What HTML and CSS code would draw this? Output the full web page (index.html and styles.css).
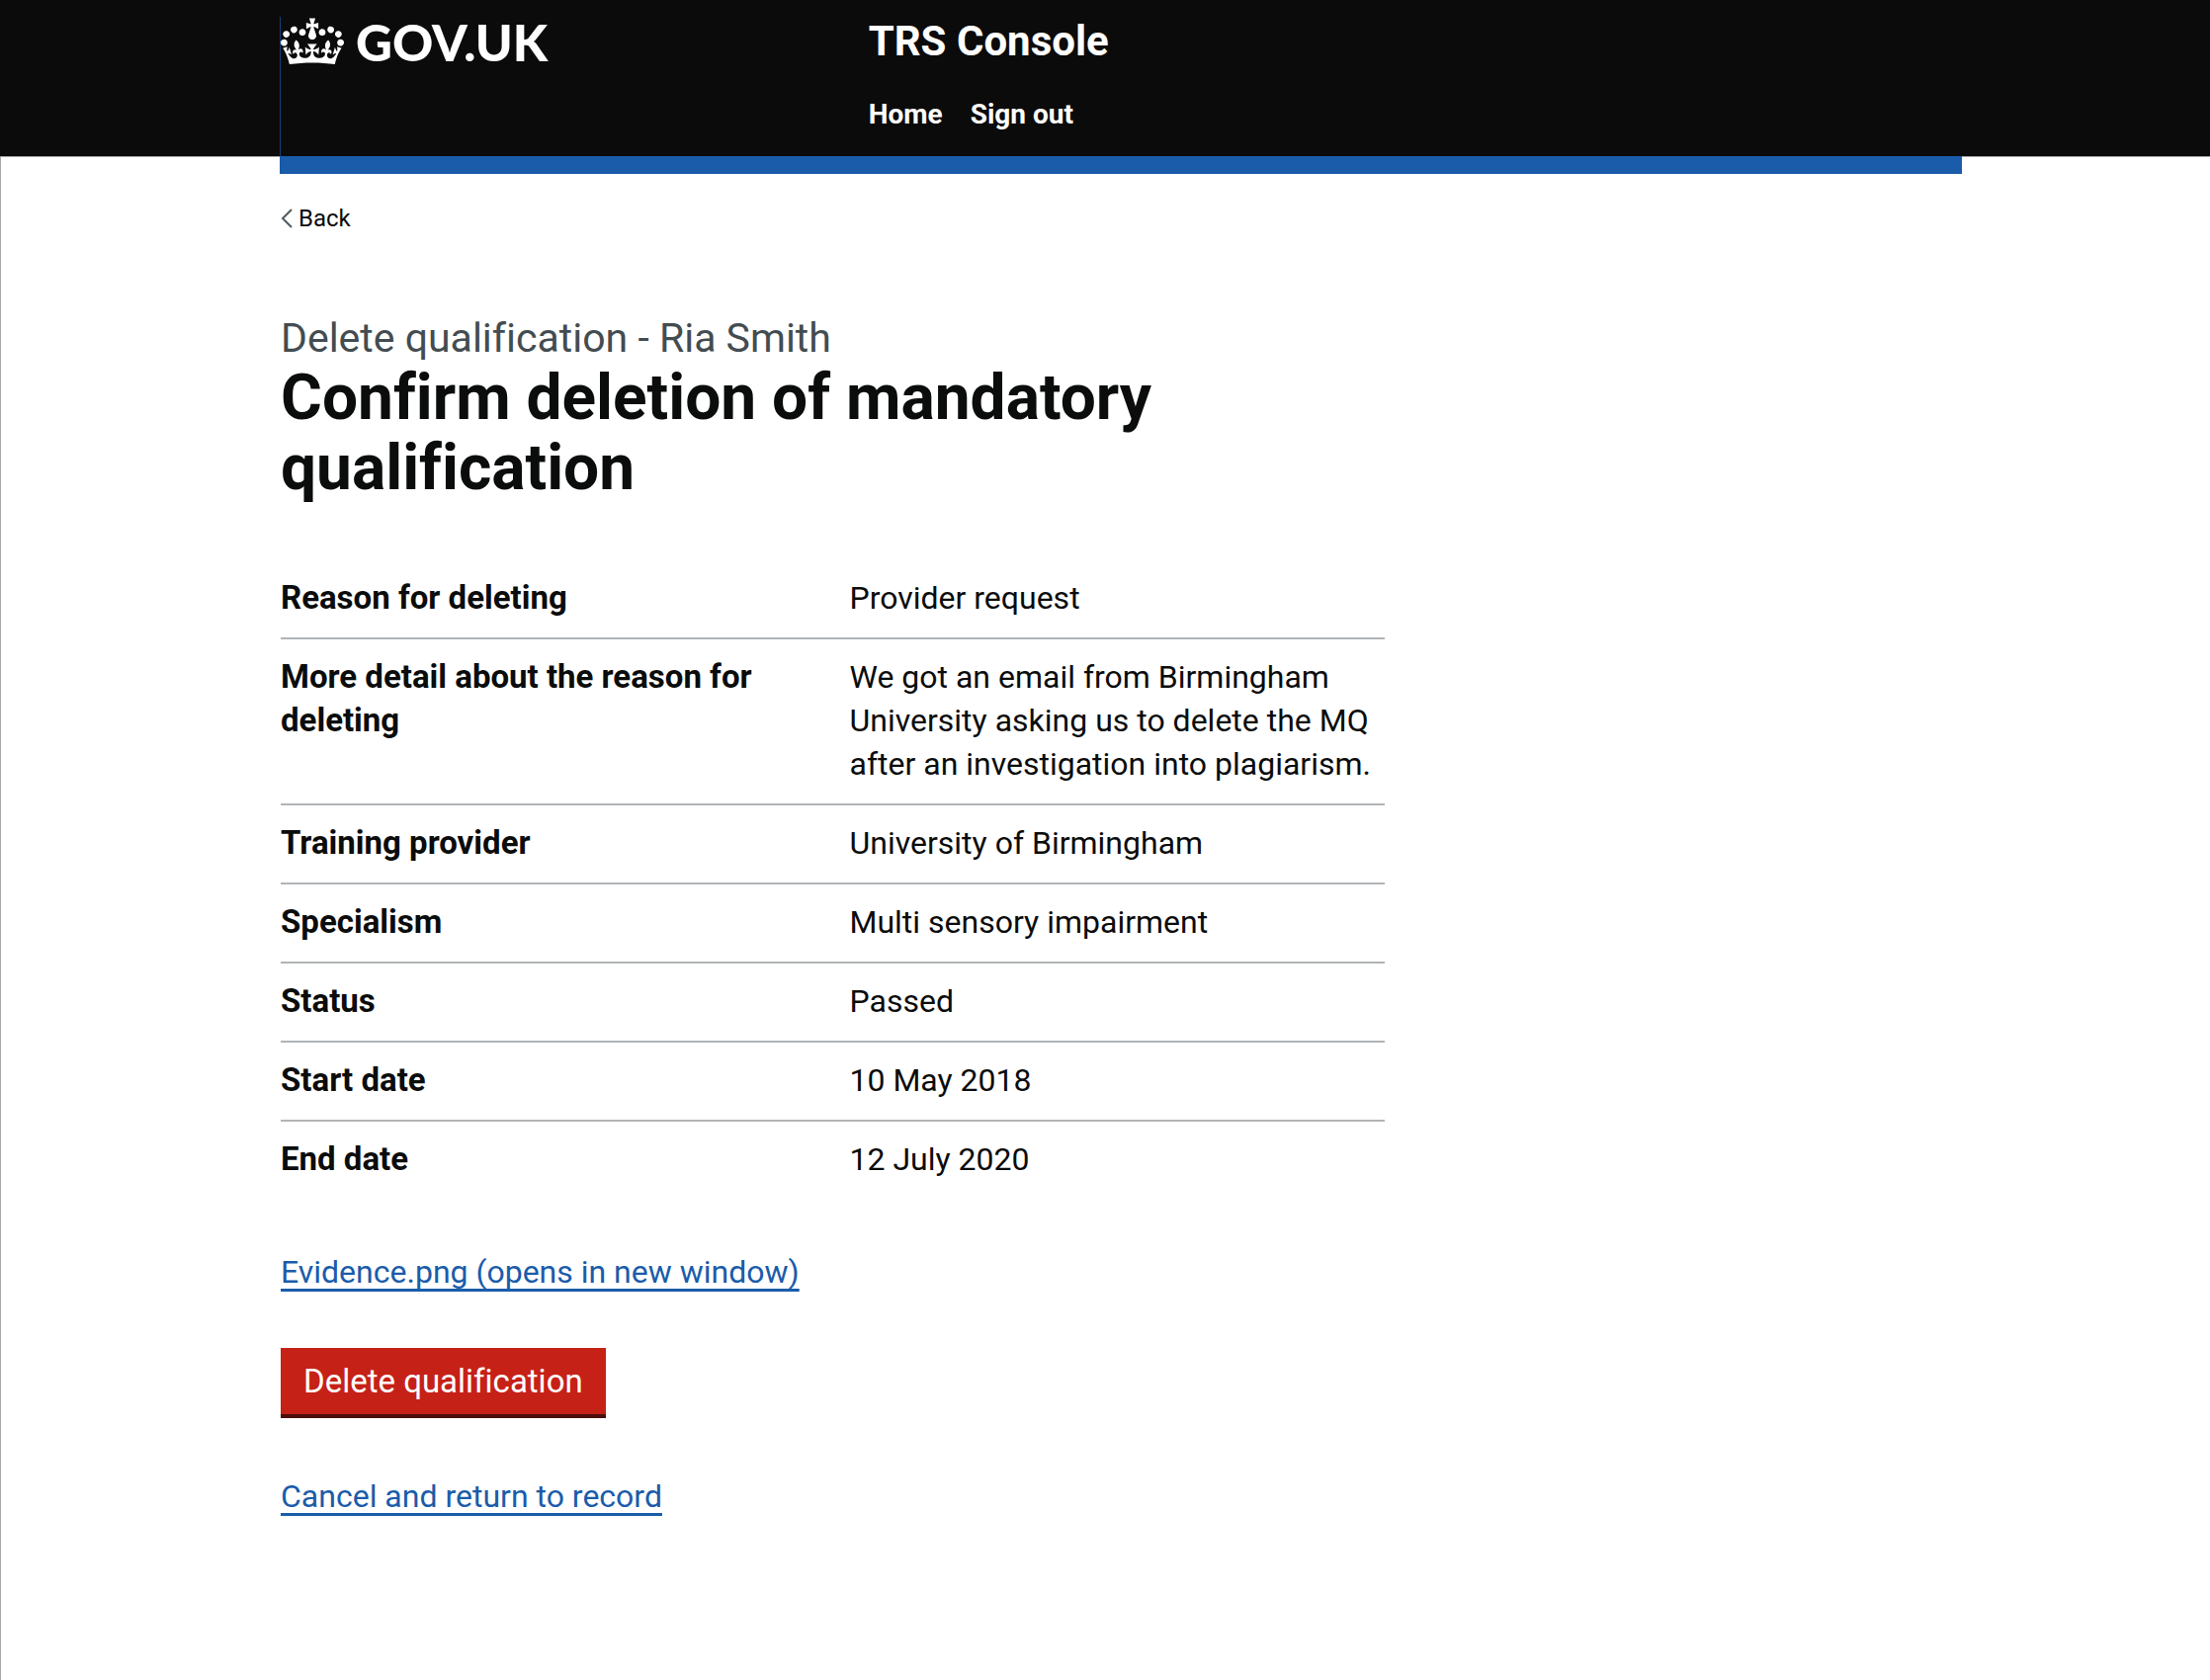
FILE: index.html
```html
<!DOCTYPE html>
<html lang="en">
<head>
<meta charset="utf-8">
<meta name="viewport" content="width=device-width, initial-scale=1">
<title>Confirm deletion of mandatory qualification - TRS Console</title>
<link rel="stylesheet" href="styles.css">
</head>
<body>
<header class="header">
  <div class="header-container">
    <a class="logo" href="#">
      <svg class="crown" viewBox="0 0 132 97" aria-hidden="true" focusable="false"><path fill="currentColor" fill-rule="evenodd" d="M25 30.2c3.5 1.5 7.7-.2 9.1-3.7 1.5-3.6-.2-7.8-3.9-9.2-3.6-1.4-7.6.3-9.1 3.9-1.4 3.5.3 7.5 3.9 9zM9 39.5c3.6 1.5 7.8-.2 9.2-3.7 1.5-3.6-.2-7.8-3.9-9.1-3.6-1.5-7.6.2-9.1 3.8-1.4 3.5.3 7.5 3.8 9zM4.4 57.2c3.5 1.5 7.7-.2 9.1-3.8 1.5-3.6-.2-7.7-3.9-9.1-3.5-1.5-7.6.3-9.1 3.8-1.4 3.5.3 7.6 3.9 9.1zm38.3-21.4c3.5 1.5 7.7-.2 9.1-3.8 1.5-3.6-.2-7.7-3.9-9.1-3.6-1.5-7.6.3-9.1 3.8-1.3 3.6.4 7.7 3.9 9.1zm64.4-5.6c-3.6 1.5-7.8-.2-9.1-3.7-1.5-3.6.2-7.8 3.8-9.2 3.6-1.4 7.7.3 9.2 3.9 1.3 3.5-.4 7.5-3.9 9zm15.9 9.3c-3.6 1.5-7.7-.2-9.1-3.7-1.5-3.6.2-7.8 3.7-9.1 3.6-1.5 7.7.2 9.2 3.8 1.5 3.5-.3 7.5-3.8 9zm4.7 17.7c-3.6 1.5-7.8-.2-9.2-3.8-1.5-3.6.2-7.7 3.9-9.1 3.6-1.5 7.7.3 9.2 3.8 1.3 3.5-.4 7.6-3.9 9.1zM89.3 35.8c-3.6 1.5-7.8-.2-9.2-3.8-1.4-3.6.2-7.7 3.9-9.1 3.6-1.5 7.7.3 9.2 3.8 1.4 3.6-.3 7.7-3.9 9.1zM69.7 17.7l8.9 4.7V9.3l-8.9 2.8c-.2-.3-.5-.6-.9-.9L72.4 0H59.6l3.5 11.2c-.3.3-.6.5-.9.9l-8.8-2.8v13.1l8.8-4.7c.3.3.6.7.9.9l-5 15.4v.1c-.2.8-.4 1.6-.4 2.4 0 4.1 3.1 7.5 7 8.1h.2c.3 0 .7.1 1 .1.4 0 .7 0 1-.1h.2c4-.6 7.1-4.1 7.1-8.1 0-.8-.1-1.7-.4-2.4V34l-5.1-15.4c.4-.2.7-.6 1-.9zM66 92.8c16.9 0 32.8 1.1 47.1 3.2 4-16.9 8.9-26.7 14-33.5l-9.6-3.4c1 4.9 1.1 7.2 0 10.2-1.5-1.4-3-4.3-4.2-8.7L108.6 76c2.8-2 5-3.2 7.5-3.3-4.4 9.4-10 11.9-13.6 11.2-4.3-.8-6.3-4.6-5.6-7.9 1-4.7 5.7-5.9 8-.5 4.3-8.7-3-11.4-7.6-8.8 7.1-7.2 7.9-13.5 2.1-21.1-8 6.1-8.1 12.3-4.5 20.8-4.7-5.4-12.1-2.5-9.5 6.2 3.4-5.2 7.9-2 7.2 3.1-.6 4.3-6.4 7.8-13.5 7.2-10.3-.9-10.9-8-11.2-13.8 2.5-.5 7.1 1.8 11 7.3L80.2 60c-4.1 4.4-8 5.3-12.3 5.4 1.4-4.4 8-11.6 8-11.6H55.5s6.4 7.2 7.9 11.6c-4.2-.1-8-1-12.3-5.4l1.4 16.4c3.9-5.5 8.5-7.7 10.9-7.3-.3 5.8-.9 12.8-11.1 13.8-7.2.6-12.9-2.9-13.5-7.2-.7-5 3.8-8.3 7.1-3.1 2.7-8.7-4.6-11.6-9.4-6.2 3.7-8.5 3.6-14.7-4.6-20.8-5.8 7.6-5 13.9 2.2 21.1-4.7-2.6-11.9.1-7.7 8.8 2.3-5.5 7.1-4.2 8.1.5.7 3.3-1.3 7.1-5.7 7.9-3.5.7-9-1.8-13.5-11.2 2.5.1 4.7 1.3 7.5 3.3l-4.7-15.4c-1.2 4.4-2.7 7.2-4.3 8.7-1.1-3-.9-5.3 0-10.2l-9.5 3.4c5 6.9 9.9 16.7 14 33.5 14.8-2.1 30.8-3.2 47.7-3.2z"/></svg>
      <span class="logo-text">GOV.UK</span>
    </a>
    <div class="header-content">
      <a class="service-name" href="#">TRS Console</a>
      <nav class="nav" aria-label="Menu">
        <a class="nav-link" href="#">Home</a>
        <a class="nav-link" href="#">Sign out</a>
      </nav>
    </div>
  </div>
</header>
<div class="page">
  <a class="back-link" href="#">
    <svg class="chevron" viewBox="0 0 12 20" aria-hidden="true"><path d="M11 1 2 10l9 9" fill="none" stroke="#505a5f" stroke-width="2"/></svg>
    Back
  </a>
  <main class="main">
    <span class="caption">Delete qualification - Ria Smith</span>
    <h1 class="heading">Confirm deletion of mandatory qualification</h1>
    <dl class="summary">
      <div class="row"><dt class="key">Reason for deleting</dt><dd class="value">Provider request</dd></div>
      <div class="row"><dt class="key">More detail about the reason for deleting</dt><dd class="value">We got an email from Birmingham University asking us to delete the MQ after an investigation into plagiarism.</dd></div>
      <div class="row"><dt class="key">Training provider</dt><dd class="value">University of Birmingham</dd></div>
      <div class="row"><dt class="key">Specialism</dt><dd class="value">Multi sensory impairment</dd></div>
      <div class="row"><dt class="key">Status</dt><dd class="value">Passed</dd></div>
      <div class="row"><dt class="key">Start date</dt><dd class="value">10 May 2018</dd></div>
      <div class="row"><dt class="key">End date</dt><dd class="value">12 July 2020</dd></div>
    </dl>
    <p class="text"><a class="link" href="#">Evidence.png (opens in new window)</a></p>
    <button class="button" type="button">Delete qualification</button>
    <p class="text"><a class="link" href="#">Cancel and return to record</a></p>
  </main>
</div>
</body>
</html>
```
FILE: styles.css
```css
*, *::before, *::after { box-sizing: border-box; }

body {
  margin: 0;
  min-height: 100vh;
  display: flex;
  flex-direction: column;
  background: #fff;
  color: #0b0c0c;
  font-family: Roboto, "Liberation Sans", sans-serif;
  font-size: 32px;
  line-height: 44px;
  font-variant-ligatures: none;
}

.header {
  padding: 17px 251px 0 283px;
  background: #0b0b0b;
  border-bottom: 1px solid #a8a9a9;
}

.header-container {
  display: grid;
  grid-template-columns: 35% 1fr;
  margin-bottom: -18px;
  background-image: linear-gradient(#163f70, #163f70);
  background-size: 1px 100%;
  background-repeat: no-repeat;
  border-bottom: 18px solid #1a5caa;
}

.header a { color: #fff; text-decoration: none; }

.logo {
  display: flex;
  align-items: flex-start;
  gap: 12px;
  padding-left: 1px;
}

.crown { width: 64px; height: 48px; margin-top: 1px; }

.logo-text {
  font-family: Lato, "Liberation Sans", sans-serif;
  font-size: 51px;
  font-weight: 900;
  line-height: 52px;
}

.header-content {
  display: flex;
  flex-direction: column;
  align-items: flex-start;
  gap: 33px;
  padding-bottom: 26px;
}

.service-name { font-size: 42px; font-weight: 700; line-height: 50px; }

.nav { display: flex; gap: 28px; }

.nav-link { font-size: 28px; font-weight: 700; line-height: 32px; }

.page {
  flex: 1;
  padding: 46px 251px 60px 283px;
  border-left: 1px solid #a8a9a9;
}

.back-link {
  display: flex;
  width: fit-content;
  align-items: center;
  gap: 6px;
  color: #0b0c0c;
  font-size: 24px;
  line-height: 32px;
  text-decoration: none;
}

.chevron { width: 12px; height: 20px; }

.main {
  width: calc(100% * 2 / 3 - 17px);
  padding-top: 80px;
}

.caption {
  display: block;
  color: #434c51;
  font-size: 41px;
  line-height: 50px;
}

.heading {
  margin: 0 0 58px;
  font-size: 64px;
  font-weight: 700;
  line-height: 71px;
}

.summary { margin: 0 0 52px; }

.row {
  display: grid;
  grid-template-columns: calc(50% + 17px) 1fr;
  padding: 16px 0 18px;
  border-bottom: 2px solid #b1b4b6;
}

.row:last-child { border-bottom: 0; }

.key { padding-right: 35px; font-size: 33px; font-weight: 700; }

.value { margin: 0; }

.text { margin: 0; }

.link {
  color: #1a5caa;
  text-decoration-thickness: 3px;
  text-underline-offset: 6px;
  text-decoration-skip-ink: none;
}

.button {
  display: block;
  margin: 55px 0 61px;
  padding: 12px 23px 11px;
  border: 0;
  background: #c62117;
  box-shadow: 0 4px 0 #4d0e0a;
  color: #fff;
  font: inherit;
  font-size: 33px;
}
```
